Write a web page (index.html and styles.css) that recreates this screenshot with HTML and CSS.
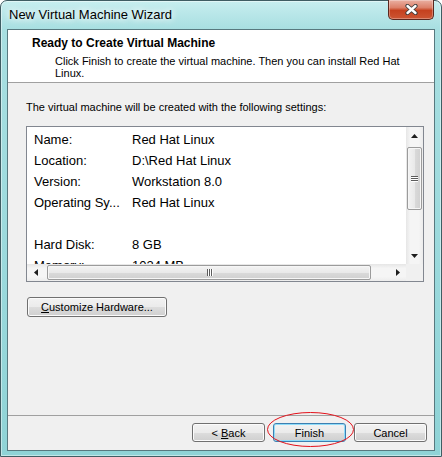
FILE: index.html
```html
<html>
<head>
	<meta charset="utf-8" />
	<title>New Virtual Machine Wizard</title>
	<link rel="stylesheet" href="styles.css">
</head>

<body>
<div class="window">
  <div class="titlebar">
    <span class="title">New Virtual Machine Wizard</span>
    <div class="close">
      <svg width="13" height="11" viewBox="0 0 13 11">
        <path d="M2.5 2l8 7M10.5 2l-8 7" stroke="#3b3b3b" stroke-width="4.2" stroke-linecap="round"/>
        <path d="M2.5 2l8 7M10.5 2l-8 7" stroke="#fff" stroke-width="2.4" stroke-linecap="round"/>
      </svg>
    </div>
  </div>

  <div class="client">
    <div class="head">
      <h1>Ready to Create Virtual Machine</h1>
      <p>Click Finish to create the virtual machine. Then you can install Red Hat<br>Linux.</p>
    </div>

    <div class="main">
      <p class="intro">The virtual machine will be created with the following settings:</p>

      <div class="listbox">
        <div class="rows">
          <div class="row"><span class="k">Name:</span><span>Red Hat Linux</span></div>
          <div class="row"><span class="k">Location:</span><span>D:\Red Hat Linux</span></div>
          <div class="row"><span class="k">Version:</span><span>Workstation 8.0</span></div>
          <div class="row"><span class="k">Operating Sy...</span><span>Red Hat Linux</span></div>
          <div class="row"></div>
          <div class="row"><span class="k">Hard Disk:</span><span>8 GB</span></div>
          <div class="row"><span class="k">Memory:</span><span>1024 MB</span></div>
        </div>

        <div class="vbar">
          <div class="arrow"><svg width="7" height="4"><path d="M0 4h7L3.5 0z"/></svg></div>
          <div class="vthumb"><i></i><i></i><i></i></div>
          <div class="fill"></div>
          <div class="arrow"><svg width="7" height="4"><path d="M0 0h7L3.5 4z"/></svg></div>
        </div>

        <div class="hbar">
          <div class="arrow"><svg width="4" height="7"><path d="M4 0v7L0 3.5z"/></svg></div>
          <div class="hthumb"><i></i><i></i><i></i></div>
          <div class="fill"></div>
          <div class="arrow"><svg width="4" height="7"><path d="M0 0v7L4 3.5z"/></svg></div>
        </div>

        <div class="corner"></div>
      </div>

      <button class="btn custom"><u>C</u>ustomize Hardware...</button>
    </div>

    <div class="foot">
      <button class="btn">&lt; <u>B</u>ack</button>
      <button class="btn default">Finish</button>
      <button class="btn">Cancel</button>
    </div>
  </div>

  <!-- red ring drawn around the Finish button -->
  <svg class="ring" width="90" height="38">
    <ellipse cx="44.5" cy="18.5" rx="43" ry="17" fill="none" stroke="#e3121b" stroke-width="1"/>
  </svg>
</div>
</body>
</html>
```

FILE: styles.css
```css
body{margin:0;background:#fff;font-family:"Liberation Sans",Arial,sans-serif;font-size:11px;color:#000;}

.window{position:relative;width:442px;height:457px;box-sizing:border-box;border:1px solid #3f5d63;border-radius:7px 7px 0 0;padding:0 6px 5px;display:flex;flex-direction:column;
  background:linear-gradient(to bottom,#c7eeef 0,#a8dfe1 28px,#9ad9dc 60%,#8fd3d6 100%);
  box-shadow:inset 0 0 0 1px rgba(255,255,255,.45);}

.titlebar{height:28px;display:flex;justify-content:space-between;align-items:flex-start;}
.title{margin:6px 0 0 2px;font-size:13px;line-height:15px;text-shadow:0 0 6px #fff,0 0 10px #fff;}
.close{width:46px;height:20px;margin:-1px 1px 0 0;box-sizing:border-box;border:1px solid #5a281f;border-top:0;border-radius:0 0 5px 5px;
  background:linear-gradient(#eab0a2 0,#dc8069 40%,#c5411f 55%,#cc5533 100%);
  box-shadow:inset 0 0 0 1px rgba(255,255,255,.3);display:flex;align-items:center;justify-content:center;}

.client{flex:1;min-height:0;border:1px solid #58797f;background:#f0f0f0;display:flex;flex-direction:column;}

.head{height:53px;box-sizing:border-box;background:#fff;border-bottom:1px solid #a0a0a0;padding:6px 0 0 24px;}
.head h1{margin:0;font-size:12px;line-height:15px;font-weight:bold;}
.head p{margin:4px 0 0 23px;line-height:12px;}

.main{flex:1;padding:18px 0 0 18px;display:flex;flex-direction:column;align-items:flex-start;}
.intro{margin:0;line-height:13px;}

.listbox{margin-top:12px;width:398px;height:156px;box-sizing:border-box;border:1px solid #828790;background:#fff;
  display:grid;grid-template-columns:1fr 17px;grid-template-rows:1fr 17px;}
.rows{overflow:hidden;padding:2px 0 0 7px;font-size:13px;}
.row{display:flex;height:21px;line-height:21px;white-space:nowrap;}
.row .k{width:98px;flex:none;}

.vbar{display:flex;flex-direction:column;background:linear-gradient(to right,#e6e6e6,#f5f5f5 25%,#f5f5f5 75%,#ececec);}
.hbar{display:flex;background:linear-gradient(to bottom,#e6e6e6,#f5f5f5 25%,#f5f5f5 75%,#ececec);}
.corner{background:#f0f0f0;}
.arrow{flex:none;width:17px;height:17px;display:flex;align-items:center;justify-content:center;}
.arrow path{fill:#1e1e1e;}
.fill{flex:1;}

.vthumb,.hthumb{flex:none;box-sizing:border-box;border:1px solid #9b9b9b;border-radius:2px;display:flex;align-items:center;justify-content:center;gap:1px;
  box-shadow:inset 0 0 0 1px #f6f6f6;}
.vthumb{margin:3px 1px 0;height:63px;flex-direction:column;background:linear-gradient(to right,#f3f3f3,#e9e9e9 50%,#dadada 51%,#d0d0d0);}
.hthumb{margin:1px 0 1px 3px;width:324px;background:linear-gradient(to bottom,#f3f3f3,#e9e9e9 50%,#dadada 51%,#d0d0d0);}
.vthumb i{display:block;width:7px;height:1px;background:#5c5c5c;box-shadow:0 1px 0 #fff;}
.hthumb i{display:block;width:1px;height:7px;background:#5c5c5c;box-shadow:1px 0 0 #fff;}

.btn{box-sizing:border-box;height:20px;padding:0;border:1px solid #707070;border-radius:3px;font-family:inherit;font-size:11px;color:#000;
  background:linear-gradient(#f2f2f2 0,#ebebeb 50%,#dddddd 51%,#cfcfcf 100%);box-shadow:inset 0 0 0 1px #fbfbfb;}
.btn.custom{width:140px;margin:15px 0 0 1px;}
.btn.default{border-color:#3c7fb1;box-shadow:inset 0 0 0 1px #8fdcf9;}

.foot{height:35px;box-sizing:border-box;border-top:1px solid #a0a0a0;padding:7px 7px 0 0;display:flex;justify-content:flex-end;gap:8px;}
.foot .btn{width:73px;height:19px;}

.ring{position:absolute;left:265px;top:410px;}
```
